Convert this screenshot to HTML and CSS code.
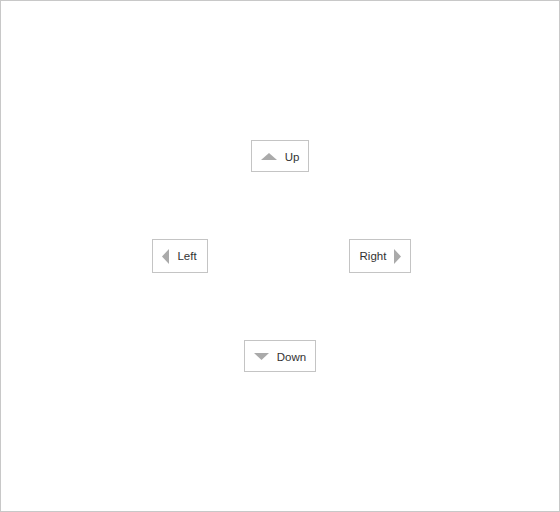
FILE: index.html
```html
<!DOCTYPE html>
<html>
<head>
<meta charset="utf-8">
<link rel="stylesheet" href="styles.css">
</head>
<body>
<div class="frame">
  <div class="pad">
    <button class="btn btn-v cell-up">
      <svg class="tri" width="16" height="7" viewBox="0 0 16 7"><polygon points="0,7 8,0 16,7"/></svg>
      <span class="label">Up</span>
    </button>
    <button class="btn btn-h cell-left">
      <svg class="tri" width="7" height="15" viewBox="0 0 7 15"><polygon points="7,0 0,7.5 7,15"/></svg>
      <span class="label">Left</span>
    </button>
    <button class="btn btn-h cell-right">
      <span class="label">Right</span>
      <svg class="tri" width="7" height="15" viewBox="0 0 7 15"><polygon points="0,0 7,7.5 0,15"/></svg>
    </button>
    <button class="btn btn-v cell-down">
      <svg class="tri" width="15" height="7" viewBox="0 0 15 7"><polygon points="0,0 15,0 7.5,7"/></svg>
      <span class="label">Down</span>
    </button>
  </div>
</div>
</body>
</html>
```
FILE: styles.css
```css
html, body {
  margin: 0;
  padding: 0;
  background: #fff;
}
.frame {
  box-sizing: border-box;
  width: 560px;
  height: 512px;
  border: 1px solid #c8c8c8;
  display: grid;
  place-content: center;
}
.pad {
  display: grid;
  grid-template-columns: repeat(3, 100px);
  grid-template-rows: repeat(3, 100px);
  place-items: center;
}
.btn {
  box-sizing: border-box;
  display: flex;
  align-items: center;
  gap: 8px;
  padding: 0 9px;
  margin: 0;
  background: #fff;
  border: 1px solid #c4c4c4;
  border-radius: 0;
  font-family: "Liberation Sans", Arial, sans-serif;
  font-size: 11.5px;
  line-height: 14px;
  color: #333;
}
.btn-v { height: 32px; }
.btn-v .label { padding-top: 1px; }
.btn-h { height: 34px; padding: 0 10px 0 9px; }
.cell-right { padding: 0 9px 0 10px; }
.tri { display: block; fill: #aaaaaa; }
.cell-up { grid-column: 2; grid-row: 1; }
.cell-left { grid-column: 1; grid-row: 2; }
.cell-right { grid-column: 3; grid-row: 2; }
.cell-down { grid-column: 2; grid-row: 3; }
```
